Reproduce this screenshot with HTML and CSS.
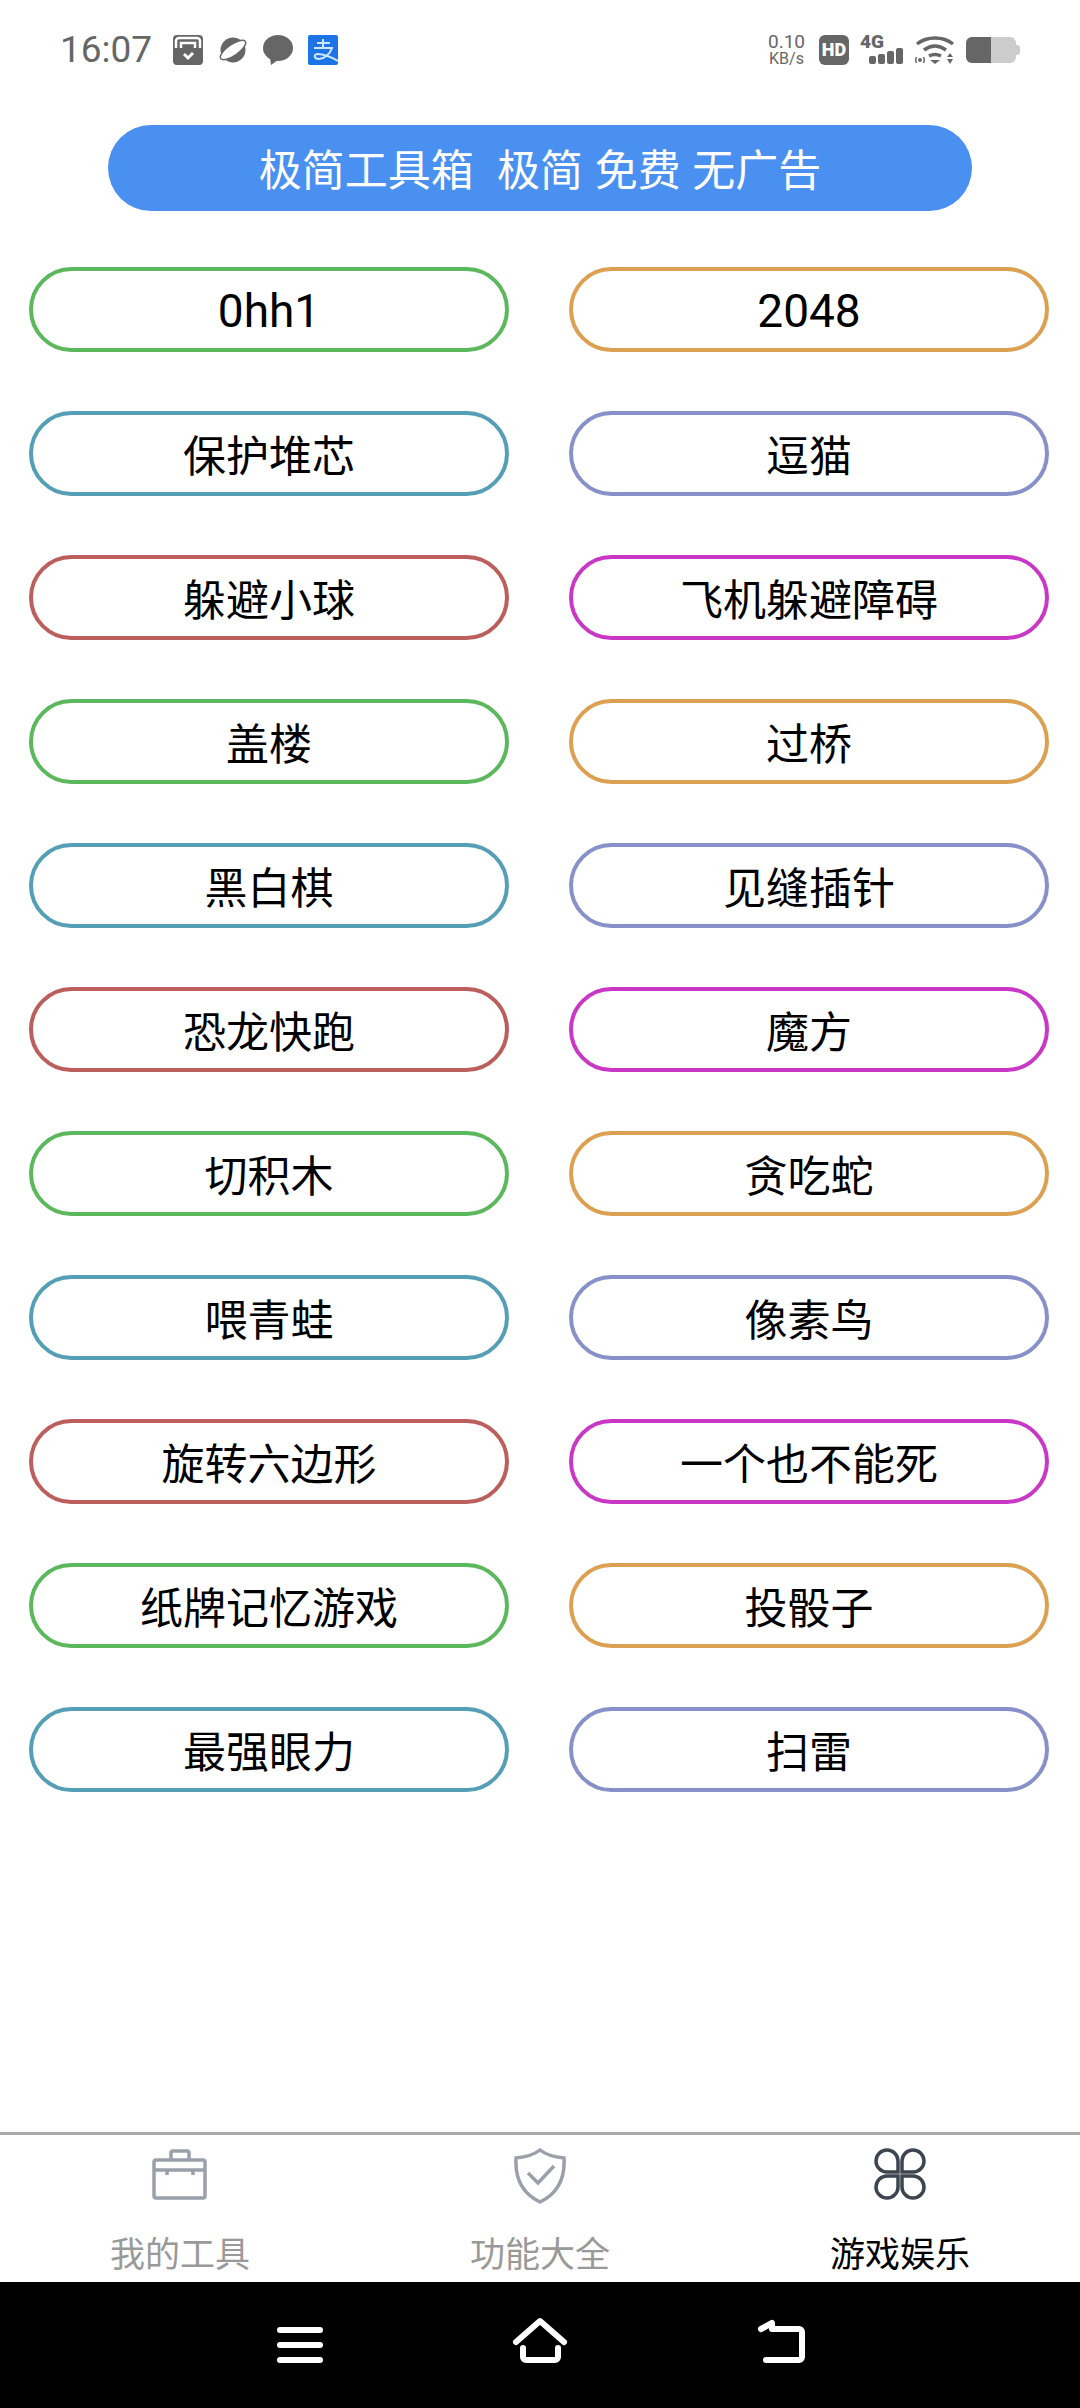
FILE: index.html
```html
<!doctype html>
<html lang="en">
    <head>
        <meta charset="UTF-8" />
        <meta name="viewport" content="width=device-width, initial-scale=1.0" />
        <title>极简工具箱</title>
        <link rel="stylesheet" href="styles.css">
    </head>
    <body>
        <div class="status-bar">
            <div class="status-left">
                <span class="clock">16:07</span>
                <svg class="note-icon" viewBox="0 0 30 30">
                    <rect width="30" height="30" rx="4" fill="#666"/>
                    <path d="M3 13V6a3 3 0 0 1 3-3h18a3 3 0 0 1 3 3v7" fill="none" stroke="#fff" stroke-width="2.500"/>
                    <path d="M8 13V8h14v5" fill="none" stroke="#fff" stroke-width="2.500"/>
                    <path d="M11 19l4 4 5-5" fill="none" stroke="#fff" stroke-width="3"/>
                </svg>
                <svg class="note-icon" viewBox="0 0 30 30">
                    <circle cx="15" cy="15" r="12.500" fill="#666"/>
                    <ellipse cx="15" cy="15" rx="15" ry="5.500" transform="rotate(-35 15 15)" fill="#fff" stroke="#666" stroke-width="1.500"/>
                </svg>
                <svg class="note-icon" viewBox="0 0 30 30">
                    <ellipse cx="15" cy="13" rx="15" ry="13" fill="#666"/>
                    <path d="M7 23l1 7 7-5z" fill="#666"/>
                </svg>
                <svg class="note-icon" viewBox="0 0 30 30">
                    <rect width="30" height="30" rx="2" fill="#1d74e6"/>
                    <path d="M9 8h13M15 4v8M6 13h18c-2 6-8 11-13 11-5 0-6-5-1-5 6 0 13 3 20 7" fill="none" stroke="#cfe6ff" stroke-width="2"/>
                </svg>
            </div>
            <div class="status-right">
                <div class="speed"><span class="speed-value">0.10</span><span>KB/s</span></div>
                <div class="hd-badge">HD</div>
                <div class="signal">
                    <span class="signal-type">4G</span>
                    <div class="signal-bars">
                        <i class="bar-1"></i><i class="bar-2"></i><i class="bar-3"></i><i class="bar-4"></i>
                    </div>
                </div>
                <svg class="wifi-icon" viewBox="0 0 40 28">
                    <path d="M2 8c10-8 26-8 36 0M9 14c7-5 15-5 22 0M14 20c4-2 8-2 12 0" fill="none" stroke="#666" stroke-width="3.500"/>
                    <path d="M15 24h10l-5 4z" fill="#666"/>
                    <path d="M35 17l3 4h-6zM32 23h6l-3 5z" fill="#666"/>
                    <circle cx="5" cy="24" r="2" fill="#666"/>
                    <path d="M1.500 21c-1 2-1 4 0 6M8.500 21c1 2 1 4 0 6" fill="none" stroke="#666" stroke-width="1.500"/>
                </svg>
                <div class="battery">
                    <div class="battery-level"></div>
                </div>
            </div>
        </div>

        <div class="banner">极简工具箱&nbsp; 极简 免费 无广告</div>

        <div class="game-grid">
            <a class="game-btn latin green">0hh1</a>
            <a class="game-btn latin orange">2048</a>
            <a class="game-btn teal">保护堆芯</a>
            <a class="game-btn purple">逗猫</a>
            <a class="game-btn red">躲避小球</a>
            <a class="game-btn magenta">飞机躲避障碍</a>
            <a class="game-btn green">盖楼</a>
            <a class="game-btn orange">过桥</a>
            <a class="game-btn teal">黑白棋</a>
            <a class="game-btn purple">见缝插针</a>
            <a class="game-btn red">恐龙快跑</a>
            <a class="game-btn magenta">魔方</a>
            <a class="game-btn green">切积木</a>
            <a class="game-btn orange">贪吃蛇</a>
            <a class="game-btn teal">喂青蛙</a>
            <a class="game-btn purple">像素鸟</a>
            <a class="game-btn red">旋转六边形</a>
            <a class="game-btn magenta">一个也不能死</a>
            <a class="game-btn green">纸牌记忆游戏</a>
            <a class="game-btn orange">投骰子</a>
            <a class="game-btn teal">最强眼力</a>
            <a class="game-btn purple">扫雷</a>
        </div>

        <div class="tab-bar">
            <div class="tab">
                <svg class="tab-icon" viewBox="0 0 56 56" stroke="#9aa0aa">
                    <rect x="2" y="12" width="51" height="38" rx="2"/>
                    <path d="M2 22h51M19 12V5a2 2 0 0 1 2-2h14a2 2 0 0 1 2 2v7M15 22v5M41 22v5"/>
                </svg>
                <span>我的工具</span>
            </div>
            <div class="tab">
                <svg class="tab-icon" viewBox="0 0 56 56" stroke="#9aa0aa">
                    <path d="M28 2C33 6 42 9 52 10c1 18-5 35-24 44C9 45 3 28 4 10 14 9 23 6 28 2z"/>
                    <path d="M16 25l10 10 16-17"/>
                </svg>
                <span>功能大全</span>
            </div>
            <div class="tab active">
                <svg class="tab-icon" viewBox="0 0 56 56" stroke="#3c4550">
                    <path d="M26 24H15a11 11 0 1 1 11-11zM30 24h11a11 11 0 1 0-11-11zM26 28H15a11 11 0 1 0 11 11zM30 28h11a11 11 0 1 1-11 11z"/>
                </svg>
                <span>游戏娱乐</span>
            </div>
        </div>

        <div class="nav-bar">
            <svg class="nav-icon" viewBox="0 0 56 56">
                <path d="M8 15h40M8 30h40M8 45h40"/>
            </svg>
            <svg class="nav-icon" viewBox="0 0 56 56">
                <path d="M4 27L28 6l24 21M11 33v9a3 3 0 0 0 3 3h29a3 3 0 0 0 3-3v-9"/>
            </svg>
            <svg class="nav-icon" viewBox="0 0 56 56">
                <path d="M9 14l11-6v6h27a3 3 0 0 1 3 3v25a3 3 0 0 1-3 3H14"/>
            </svg>
        </div>
    </body>
</html>
```

FILE: styles.css
```css
* {
    margin: 0;
    padding: 0;
    box-sizing: border-box;
}

body {
    font-family: "Noto Sans CJK SC", Roboto, sans-serif;
    background: #fff;
    color: #000;
    width: 1080px;
    height: 2408px;
    display: flex;
    flex-direction: column;
    overflow: hidden;
}

.status-bar {
    height: 99px;
    padding: 0 64px 0 60px;
    display: flex;
    justify-content: space-between;
    align-items: center;
}

.status-left,
.status-right {
    display: flex;
    align-items: center;
}

.status-left {
    gap: 15px;
}

.status-right {
    gap: 11px;
}

.clock {
    font-family: Roboto, sans-serif;
    font-size: 37px;
    color: #666;
    margin-right: 6px;
}

.note-icon {
    width: 30px;
    height: 30px;
    display: block;
}

.speed {
    display: flex;
    flex-direction: column;
    align-items: center;
    font-family: Roboto, sans-serif;
    font-size: 16px;
    line-height: 15px;
    color: #666;
    margin-right: 3px;
}

.speed-value {
    font-size: 19px;
    line-height: 18px;
}

.hd-badge {
    width: 30px;
    height: 30px;
    background: #666;
    color: #fff;
    border-radius: 6px;
    font-family: Roboto, sans-serif;
    font-size: 18px;
    font-weight: 900;
    display: flex;
    align-items: center;
    justify-content: center;
}

.signal {
    width: 44px;
    display: flex;
    flex-direction: column;
    align-items: flex-start;
}

.signal-type {
    font-family: Roboto, sans-serif;
    font-size: 19px;
    line-height: 13px;
    font-weight: 900;
    color: #666;
}

.signal-bars {
    display: flex;
    align-items: flex-end;
    gap: 2px;
    margin-left: 9px;
}

.signal-bars i {
    display: block;
    width: 7px;
    background: #666;
    border-radius: 2px;
}

.bar-1 {
    height: 8px;
}

.bar-2 {
    height: 10px;
}

.bar-3 {
    height: 13px;
}

.bar-4 {
    height: 16px;
}

.wifi-icon {
    width: 40px;
    height: 28px;
    display: block;
}

.battery {
    width: 50px;
    height: 26px;
    background: #ccc;
    border-radius: 6px;
    position: relative;
}

.battery:after {
    content: "";
    position: absolute;
    right: -4px;
    top: 8px;
    width: 4px;
    height: 10px;
    background: #ccc;
    border-radius: 0 3px 3px 0;
}

.battery-level {
    width: 25px;
    height: 100%;
    background: #666;
    border-radius: 6px 0 0 6px;
}

.banner {
    width: 864px;
    height: 86px;
    margin: 26px auto 0;
    padding-bottom: 2px;
    background: #4a90f0;
    color: #fff;
    border-radius: 43px;
    font-size: 43px;
    word-spacing: 2px;
    display: flex;
    align-items: center;
    justify-content: center;
    white-space: pre;
}

.game-grid {
    display: grid;
    grid-template-columns: 480px 480px;
    grid-auto-rows: 85px;
    justify-content: space-between;
    row-gap: 59px;
    padding: 0 31px 0 29px;
    margin-top: 56px;
    flex: 1;
}

.game-btn {
    border: 4px solid;
    border-radius: 43px;
    font-size: 43px;
    padding-bottom: 2px;
    display: flex;
    align-items: center;
    justify-content: center;
    color: #000;
}

.latin {
    font-family: Roboto, sans-serif;
    font-size: 46px;
    padding-bottom: 0;
    padding-top: 2px;
}

.green {
    border-color: #5cb85c;
}

.orange {
    border-color: #dca052;
}

.teal {
    border-color: #559fb6;
}

.purple {
    border-color: #8790c8;
}

.red {
    border-color: #bc5f5c;
}

.magenta {
    border-color: #c838c4;
}

.tab-bar {
    height: 150px;
    border-top: 3px solid #aaa;
    display: grid;
    grid-template-columns: repeat(3, 1fr);
}

.tab {
    display: flex;
    flex-direction: column;
    align-items: center;
    padding-top: 13px;
    font-size: 35px;
    line-height: 46px;
    color: #999;
}

.tab.active {
    color: #000;
}

.tab-icon {
    width: 56px;
    height: 56px;
    fill: none;
    stroke-width: 3.500;
    margin-bottom: 25px;
}

.nav-bar {
    height: 126px;
    background: #000;
    display: flex;
    justify-content: center;
    align-items: center;
    gap: 184px;
    padding-bottom: 4px;
}

.nav-icon {
    width: 56px;
    height: 56px;
    fill: none;
    stroke: #fff;
    stroke-width: 6;
    stroke-linecap: round;
    stroke-linejoin: round;
}
```
